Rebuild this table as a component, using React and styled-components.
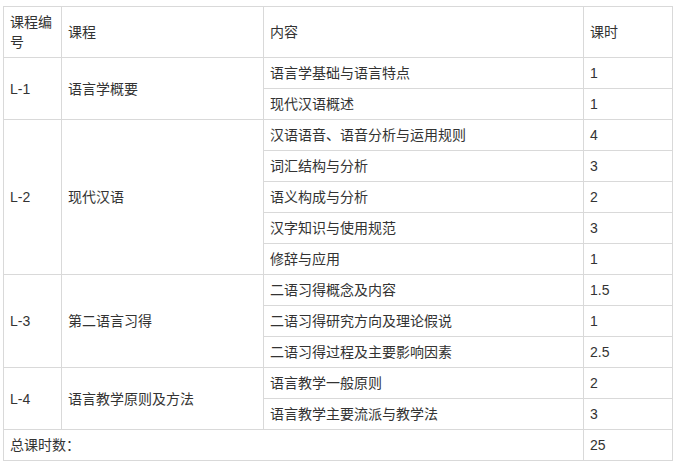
import React from "react";
import styled, { createGlobalStyle } from "styled-components";

const Global = createGlobalStyle`
  html, body { margin: 0; padding: 0; background: #fff; }
  body {
    font-family: "Liberation Sans", "Noto Sans CJK SC", sans-serif;
    color: #333;
  }
`;

const Page = styled.div`
  padding: 6px 0 0 3px;
`;

const Table = styled.table`
  border-collapse: collapse;
  table-layout: fixed;
  width: 670px;
  font-size: 14px;
  line-height: 20px;
`;

const Col = styled.col`
  width: ${(p) => p.$w}px;
`;

const Cell = styled.td`
  border: 1px solid #d9d9d9;
  padding: 5px 6px;
  vertical-align: middle;
  text-align: left;
  font-weight: normal;
  color: #333;
  word-break: break-all;
`;

const data = [
  {
    id: "L-1",
    name: "语言学概要",
    items: [
      ["语言学基础与语言特点", "1"],
      ["现代汉语概述", "1"],
    ],
  },
  {
    id: "L-2",
    name: "现代汉语",
    items: [
      ["汉语语音、语音分析与运用规则", "4"],
      ["词汇结构与分析", "3"],
      ["语义构成与分析", "2"],
      ["汉字知识与使用规范", "3"],
      ["修辞与应用", "1"],
    ],
  },
  {
    id: "L-3",
    name: "第二语言习得",
    items: [
      ["二语习得概念及内容", "1.5"],
      ["二语习得研究方向及理论假说", "1"],
      ["二语习得过程及主要影响因素", "2.5"],
    ],
  },
  {
    id: "L-4",
    name: "语言教学原则及方法",
    items: [
      ["语言教学一般原则", "2"],
      ["语言教学主要流派与教学法", "3"],
    ],
  },
];

export default function App() {
  return (
    <>
      <Global />
      <Page>
        <Table>
          <colgroup>
            <Col $w={58} />
            <Col $w={202} />
            <Col $w={320} />
            <Col $w={89} />
          </colgroup>
          <tbody>
            <tr>
              <Cell>课程编号</Cell>
              <Cell>课程</Cell>
              <Cell>内容</Cell>
              <Cell>课时</Cell>
            </tr>
            {data.map((g) =>
              g.items.map((it, i) => (
                <tr key={g.id + i}>
                  {i === 0 && <Cell rowSpan={g.items.length}>{g.id}</Cell>}
                  {i === 0 && <Cell rowSpan={g.items.length}>{g.name}</Cell>}
                  <Cell>{it[0]}</Cell>
                  <Cell>{it[1]}</Cell>
                </tr>
              ))
            )}
            <tr>
              <Cell colSpan={3}>总课时数：</Cell>
              <Cell>25</Cell>
            </tr>
          </tbody>
        </Table>
      </Page>
    </>
  );
}
